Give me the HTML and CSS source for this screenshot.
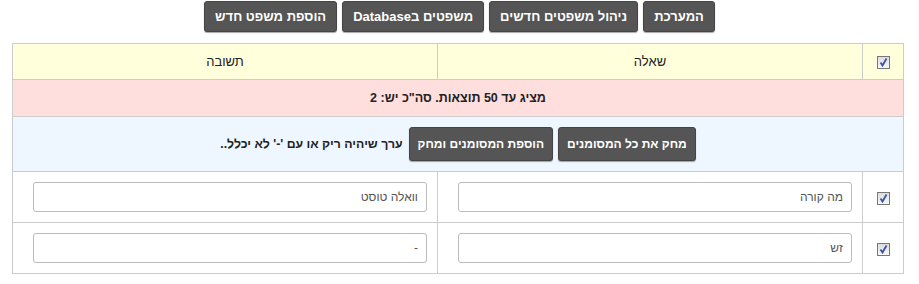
FILE: index.html
```html
<!DOCTYPE html>
<html lang="he" dir="rtl">
<head>
<meta charset="utf-8">
<link rel="stylesheet" href="styles.css">
</head>
<body>
<div class="topbar">
  <a class="btn">המערכת</a>
  <a class="btn">ניהול משפטים חדשים</a>
  <a class="btn">משפטים בDatabase</a>
  <a class="btn">הוספת משפט חדש</a>
</div>
<table class="grid">
  <tr class="head">
    <td class="chk"><span class="cb"><svg viewBox="0 0 13 13" width="13" height="13"><path d="M3.5 6.5 L5.5 9.5 L9.5 2.5" fill="none" stroke="#3a52a8" stroke-width="1.8"/></svg></span></td>
    <td class="col">שאלה</td>
    <td class="col">תשובה</td>
  </tr>
  <tr class="info">
    <td colspan="3">מציג עד 50 תוצאות. סה"כ יש: 2</td>
  </tr>
  <tr class="actions">
    <td colspan="3">
      <div class="actwrap">
        <a class="btn big">מחק את כל המסומנים</a>
        <a class="btn big">הוספת המסומנים ומחק</a>
        <span class="note">ערך שיהיה ריק או עם '-' לא יכלל..</span>
      </div>
    </td>
  </tr>
  <tr class="row">
    <td class="chk"><span class="cb"><svg viewBox="0 0 13 13" width="13" height="13"><path d="M3.5 6.5 L5.5 9.5 L9.5 2.5" fill="none" stroke="#3a52a8" stroke-width="1.8"/></svg></span></td>
    <td class="cell"><input class="field" type="text" value="מה קורה"></td>
    <td class="cell"><input class="field" type="text" value="וואלה טוסט"></td>
  </tr>
  <tr class="row">
    <td class="chk"><span class="cb"><svg viewBox="0 0 13 13" width="13" height="13"><path d="M3.5 6.5 L5.5 9.5 L9.5 2.5" fill="none" stroke="#3a52a8" stroke-width="1.8"/></svg></span></td>
    <td class="cell"><input class="field" type="text" value="זש"></td>
    <td class="cell"><input class="field" type="text" value="-"></td>
  </tr>
</table>
</body>
</html>
```
FILE: styles.css
```css
body {
  margin: 0;
  padding-top: 1px;
  font-family: "Liberation Sans", Arial, sans-serif;
  font-size: 13px;
  color: #222;
  background: #fff;
}
.topbar {
  display: flex;
  justify-content: center;
  gap: 5px;
}
.btn {
  display: inline-flex;
  align-items: center;
  justify-content: center;
  box-sizing: border-box;
  height: 31px;
  padding: 0 10px;
  background: #555;
  color: #fff;
  font-weight: bold;
  font-size: 13px;
  border-radius: 3px;
  border: 1px solid #444;
  box-shadow: 0 1px 1px rgba(0,0,0,0.35);
  white-space: nowrap;
  cursor: pointer;
}
.grid {
  width: 891px;
  margin: 11px 15px 0 auto;
  border-collapse: collapse;
  table-layout: fixed;
}
.grid td {
  border: 1px solid #ccc;
  padding: 0;
  text-align: center;
}
.chk {
  width: 40px;
}
.head td {
  background: #ffffdc;
  height: 35px;
}
.head .col {
  width: 424px;
}
.info td {
  background: #ffdede;
  height: 36px;
  font-weight: bold;
  font-size: 12.5px;
}
.actions td {
  background: #eef7ff;
  height: 54px;
}
.actwrap {
  display: flex;
  justify-content: center;
  align-items: center;
  gap: 5px;
}
.btn.big {
  height: 34px;
  padding: 0 8px;
  font-size: 12px;
}
.note {
  font-weight: bold;
  font-size: 12.3px;
  margin-right: 1px;
}
.row td {
  height: 50px;
}
.cell {
  text-align: right !important;
  padding-right: 10px !important;
}
.field {
  box-sizing: border-box;
  width: 394px;
  height: 30px;
  border: 1px solid #bbb;
  border-radius: 3px;
  padding: 0 8px;
  font-family: "Liberation Sans", Arial, sans-serif;
  font-size: 12px;
  color: #555;
  background: #fff;
  text-align: right;
  direction: rtl;
  display: block;
}
.cb {
  display: inline-block;
  box-sizing: border-box;
  width: 13px;
  height: 13px;
  border: 1px solid #777;
  background: linear-gradient(#dcdcdc, #f8f8f8);
  vertical-align: middle;
  position: relative;
}
.cb svg {
  position: absolute;
  left: -1px;
  top: -1px;
}
```
